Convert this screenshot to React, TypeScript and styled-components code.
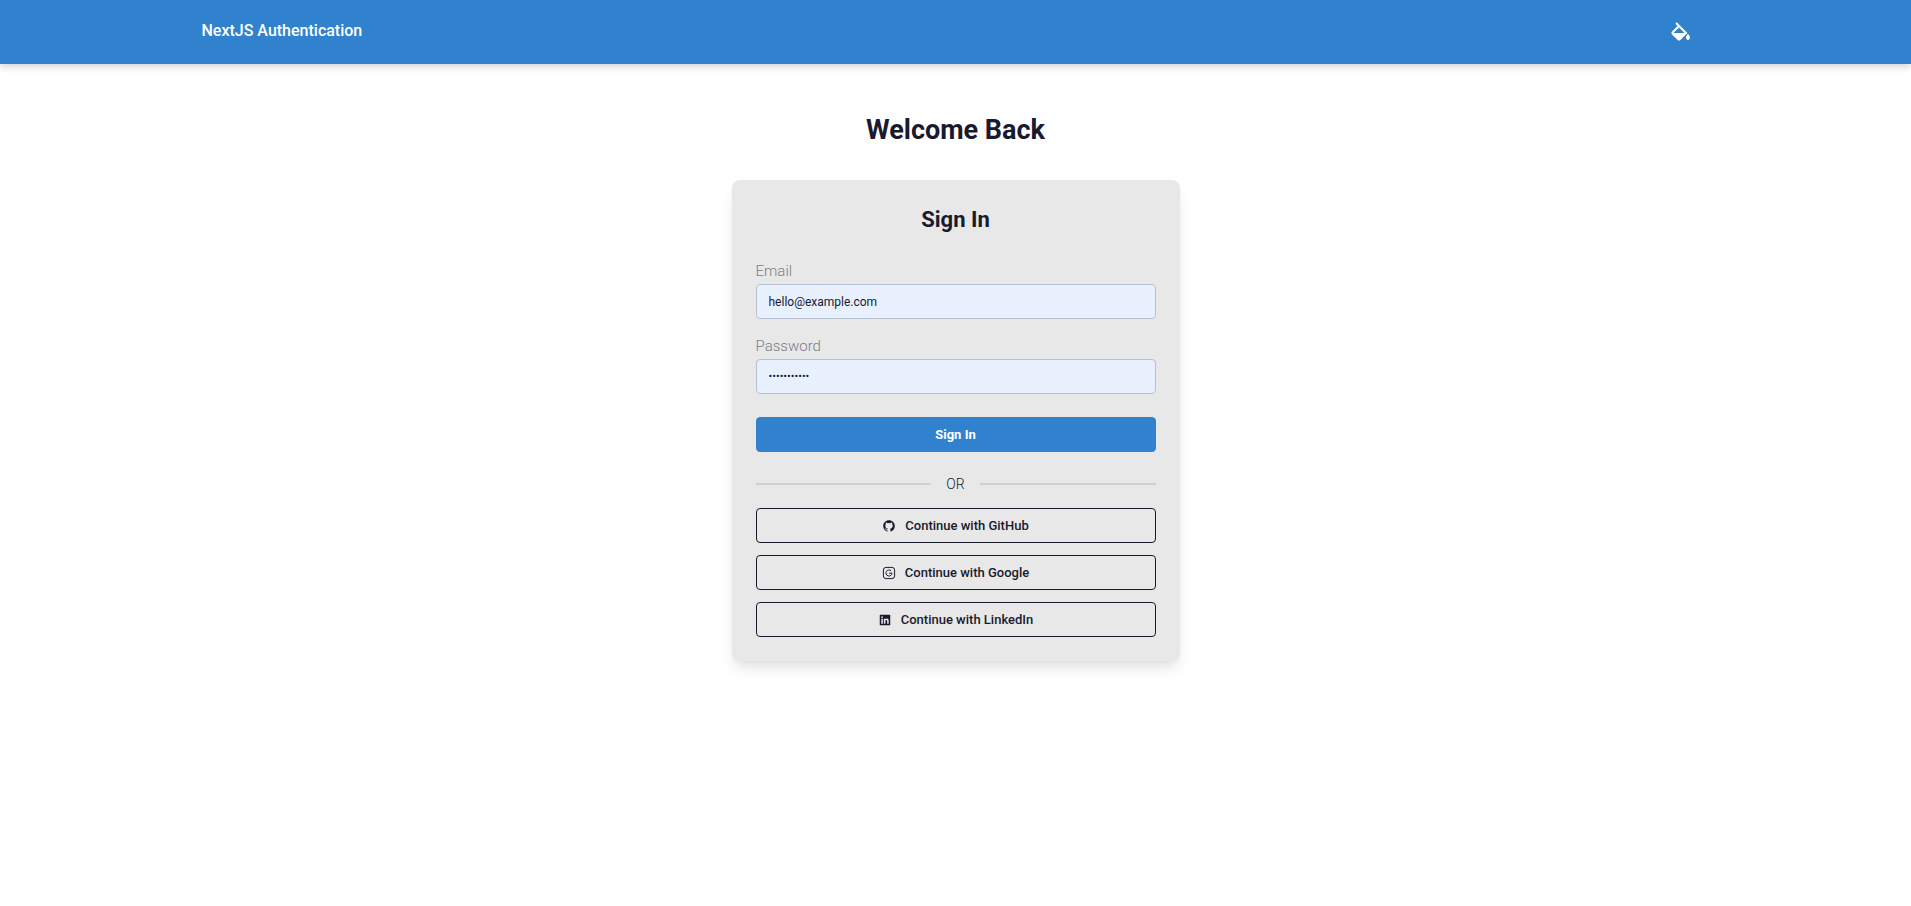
import React from "react";
import styled, { createGlobalStyle } from "styled-components";
import { BiSolidColorFill, BiLogoGithub, BiLogoLinkedinSquare } from "react-icons/bi";

const ink = "#1a1a2e";
const primary = "#3182ce";

const GlobalStyle = createGlobalStyle`
  *, *::before, *::after { box-sizing: border-box; }
  body {
    margin: 0;
    background: #ffffff;
    color: ${ink};
    font-family: Roboto, "Liberation Sans", sans-serif;
    font-size: 14px;
    font-weight: 300;
  }
  button, input { font: inherit; color: inherit; }
`;

const Header = styled.header`
  background: ${primary};
  box-shadow: 0 2px 8px rgba(0, 0, 0, 0.2);
`;

const HeaderInner = styled.div`
  display: flex;
  align-items: center;
  justify-content: space-between;
  max-width: 1536px;
  height: 64px;
  margin: 0 auto;
  padding: 0 14px;
`;

const Brand = styled.a`
  padding-bottom: 2px;
  color: #ffffff;
  font-size: 16px;
  line-height: 24px;
  font-weight: 500;
  text-decoration: none;
`;

const ThemeButton = styled.button`
  display: flex;
  padding: 8px 18px;
  border: 0;
  background: transparent;
  color: #ffffff;
  cursor: pointer;
`;

const Main = styled.main`
  display: flex;
  flex-direction: column;
  align-items: center;
  padding: 48px 14px;
`;

const PageTitle = styled.h1`
  margin: 0 0 32px;
  font-size: 27px;
  line-height: 36px;
  font-weight: 700;
`;

const Card = styled.section`
  width: 100%;
  max-width: 448px;
  padding: 24px;
  border-radius: 8px;
  background: #e8e8e8;
  box-shadow: 0 10px 15px -3px rgba(0, 0, 0, 0.1), 0 4px 6px -2px rgba(0, 0, 0, 0.05);
`;

const CardTitle = styled.h2`
  margin: 0 0 24px;
  font-size: 22px;
  line-height: 32px;
  font-weight: 700;
  text-align: center;
`;

const Field = styled.div`
  display: flex;
  flex-direction: column;
  margin-bottom: 16px;
`;

const Label = styled.label`
  margin-bottom: 2px;
  color: #7c7c8a;
  font-size: 15px;
  line-height: 22px;
`;

const TextInput = styled.input`
  width: 100%;
  height: 35px;
  padding: 0 12px;
  border: 1px solid #b8c0d2;
  border-radius: 4px;
  outline: none;
  background: #e8f0fe;
  font-size: 12px;
  font-weight: 400;

  &[type="password"] {
    font-size: 11px;
  }
`;

const Button = styled.button<{ $outline?: boolean }>`
  display: flex;
  align-items: center;
  justify-content: center;
  gap: 9px;
  width: 100%;
  height: 35px;
  padding: 0 14px;
  border: 1px solid ${(p) => (p.$outline ? ink : primary)};
  border-radius: 4px;
  background: ${(p) => (p.$outline ? "transparent" : primary)};
  color: ${(p) => (p.$outline ? ink : "#ffffff")};
  font-size: 13px;
  line-height: 20px;
  font-weight: ${(p) => (p.$outline ? 500 : 700)};
  cursor: pointer;
`;

const SubmitRow = styled.div`
  padding-top: 7px;
`;

const Divider = styled.div`
  display: flex;
  align-items: center;
  gap: 15px;
  margin: 20px 0 12px;
  font-size: 14px;
  line-height: 24px;

  &::before,
  &::after {
    content: "";
    flex: 1;
    height: 2px;
    background: #d1d1d1;
  }
`;

const Providers = styled.div`
  display: flex;
  flex-direction: column;
  gap: 12px;
`;

const GoogleIcon = () => (
  <svg width="14" height="14" viewBox="0 0 24 24" fill="none" stroke="currentColor" strokeWidth="1.7" aria-hidden="true">
    <rect x="2.4" y="2.4" width="19.2" height="19.2" rx="4.5" />
    <path d="M15.6 8.2A5.2 5.2 0 1 0 17.2 12.2H12.2" />
  </svg>
);

export default function App() {
  return (
    <>
      <GlobalStyle />
      <Header>
        <HeaderInner>
          <Brand href="#">NextJS Authentication</Brand>
          <ThemeButton type="button" aria-label="Change theme">
            <BiSolidColorFill size={24} />
          </ThemeButton>
        </HeaderInner>
      </Header>
      <Main>
        <PageTitle>Welcome Back</PageTitle>
        <Card>
          <CardTitle>Sign In</CardTitle>
          <form onSubmit={(e) => e.preventDefault()}>
            <Field>
              <Label htmlFor="email">Email</Label>
              <TextInput id="email" type="email" defaultValue="hello@example.com" />
            </Field>
            <Field>
              <Label htmlFor="password">Password</Label>
              <TextInput id="password" type="password" defaultValue="password123" />
            </Field>
            <SubmitRow>
              <Button type="submit">Sign In</Button>
            </SubmitRow>
          </form>
          <Divider>OR</Divider>
          <Providers>
            <Button type="button" $outline>
              <BiLogoGithub size={14} />
              Continue with GitHub
            </Button>
            <Button type="button" $outline>
              <GoogleIcon />
              Continue with Google
            </Button>
            <Button type="button" $outline>
              <BiLogoLinkedinSquare size={14} />
              Continue with LinkedIn
            </Button>
          </Providers>
        </Card>
      </Main>
    </>
  );
}
